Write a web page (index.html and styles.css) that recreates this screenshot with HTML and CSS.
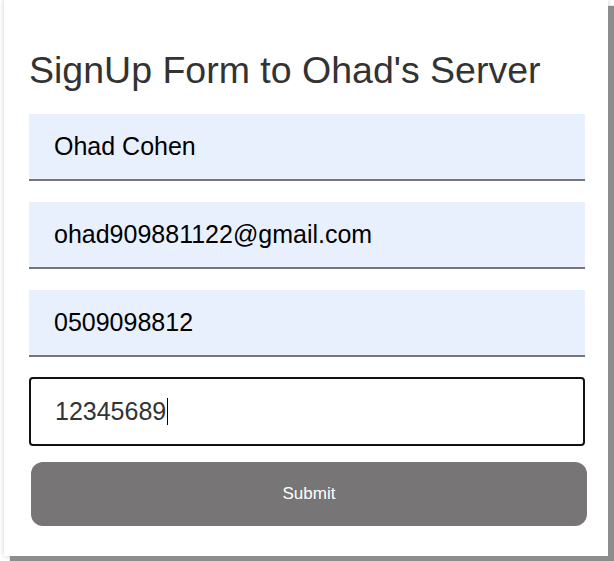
FILE: index.html
```html
<!DOCTYPE html>
<html lang="en">
<head>
<meta charset="utf-8">
<title>SignUp Form</title>
<link rel="stylesheet" href="styles.css">
</head>
<body>
<form class="card">
  <h2 class="title">SignUp Form to Ohad's Server</h2>
  <div class="field autofill">Ohad Cohen</div>
  <div class="field autofill">ohad909881122@gmail.com</div>
  <div class="field autofill">0509098812</div>
  <div class="field focused">12345689<span class="caret"></span></div>
  <button type="button" class="submit">Submit</button>
</form>
</body>
</html>
```
FILE: styles.css
```css
html, body {
  margin: 0;
  padding: 0;
  background: #ffffff;
}
body {
  font-family: "Liberation Sans", Arial, sans-serif;
  padding-bottom: 20px;
}
.card {
  margin-left: 4px;
  width: 604px;
  box-sizing: border-box;
  padding: 49px 23px 30px 25px;
  background: #ffffff;
  box-shadow: 6px 6px 1px #8d8d8d, 0 0 5px rgba(0, 0, 0, 0.2);
  display: flex;
  flex-direction: column;
}
.title {
  margin: 0 0 22px;
  font-size: 37.5px;
  font-weight: normal;
  line-height: normal;
  color: #333333;
}
.field {
  box-sizing: border-box;
  width: 556px;
  height: 67px;
  padding: 0 25px;
  display: flex;
  align-items: center;
  font-size: 25px;
  color: #000000;
  margin-bottom: 21px;
}
.autofill {
  background: #e8f0fe;
  border-bottom: 2px solid #767676;
}
.focused {
  margin-top: -1px;
  height: 69px;
  padding-left: 24px;
  border: 2px solid #111111;
  border-radius: 4px;
  color: #333333;
  margin-bottom: 16px;
}
.caret {
  display: inline-block;
  width: 1px;
  height: 27px;
  background: #000000;
  margin-left: 1px;
}
.submit {
  margin: 0 0 0 2px;
  width: 556px;
  height: 64px;
  border: none;
  border-radius: 12px;
  background: #777576;
  color: #ffffff;
  font-family: "Liberation Sans", Arial, sans-serif;
  font-size: 17px;
  cursor: pointer;
}
```
